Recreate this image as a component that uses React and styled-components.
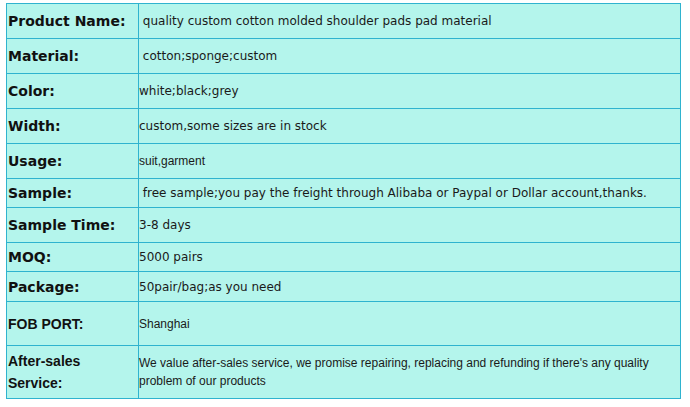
import React from 'react'
import styled, { createGlobalStyle } from 'styled-components'

const GlobalStyle = createGlobalStyle`
  body {
    margin: 0;
    background: #ffffff;
  }
`

const Wrapper = styled.div`
  padding: 3px 0 0 6px;
`

const Table = styled.table`
  border-collapse: collapse;
  width: 675px;
  background: #b4f5ec;
  table-layout: fixed;
`

const Row = styled.tr`
  height: ${p => p.$h}px;
`

const Label = styled.td`
  width: 130px;
  border: 1px solid #2fb3cf;
  padding: 0 0 0 1px;
  vertical-align: middle;
  color: #111;
  font-family: ${p => (p.$arial ? '"Liberation Sans", Arial' : '"DejaVu Sans", Verdana')}, sans-serif;
  font-weight: bold;
  font-size: 14px;
  line-height: ${p => (p.$arial ? '22px' : '18px')};
`

const Value = styled.td`
  border: 1px solid #2fb3cf;
  padding: 0;
  vertical-align: middle;
  color: #1a1a1a;
  white-space: pre-wrap;
  font-family: ${p => (p.$arial ? '"Liberation Sans", Arial' : '"DejaVu Sans", Verdana')}, sans-serif;
  font-size: 12px;
  line-height: 18px;
`

const rows = [
  { label: 'Product Name:', value: ' quality custom cotton molded shoulder pads pad material', h: 35 },
  { label: 'Material:', value: ' cotton;sponge;custom', h: 35 },
  { label: 'Color:', value: 'white;black;grey', h: 35 },
  { label: 'Width:', value: 'custom,some sizes are in stock', h: 35 },
  { label: 'Usage:', value: 'suit,garment', h: 35, arialValue: true },
  { label: 'Sample:', value: ' free sample;you pay the freight through Alibaba or Paypal or Dollar account,thanks.', h: 29 },
  { label: 'Sample Time:', value: '3-8 days', h: 35 },
  { label: 'MOQ:', value: '5000 pairs', h: 29 },
  { label: 'Package:', value: '50pair/bag;as you need', h: 30 },
  { label: 'FOB PORT:', value: 'Shanghai', h: 44, arialLabel: true, arialValue: true },
  {
    label: (
      <>
        After-sales
        <br />
        Service:
      </>
    ),
    key: 'after-sales',
    value: "We value after-sales service, we promise repairing, replacing and refunding if there's any quality problem of our products",
    h: 53,
    arialLabel: true,
    arialValue: true,
  },
]

const App = () => (
  <Wrapper>
    <GlobalStyle />
    <Table>
      <tbody>
        {rows.map(r => (
          <Row key={r.key || r.label} $h={r.h}>
            <Label $arial={r.arialLabel}>{r.label}</Label>
            <Value $arial={r.arialValue}>{r.value}</Value>
          </Row>
        ))}
      </tbody>
    </Table>
  </Wrapper>
)

export default App
